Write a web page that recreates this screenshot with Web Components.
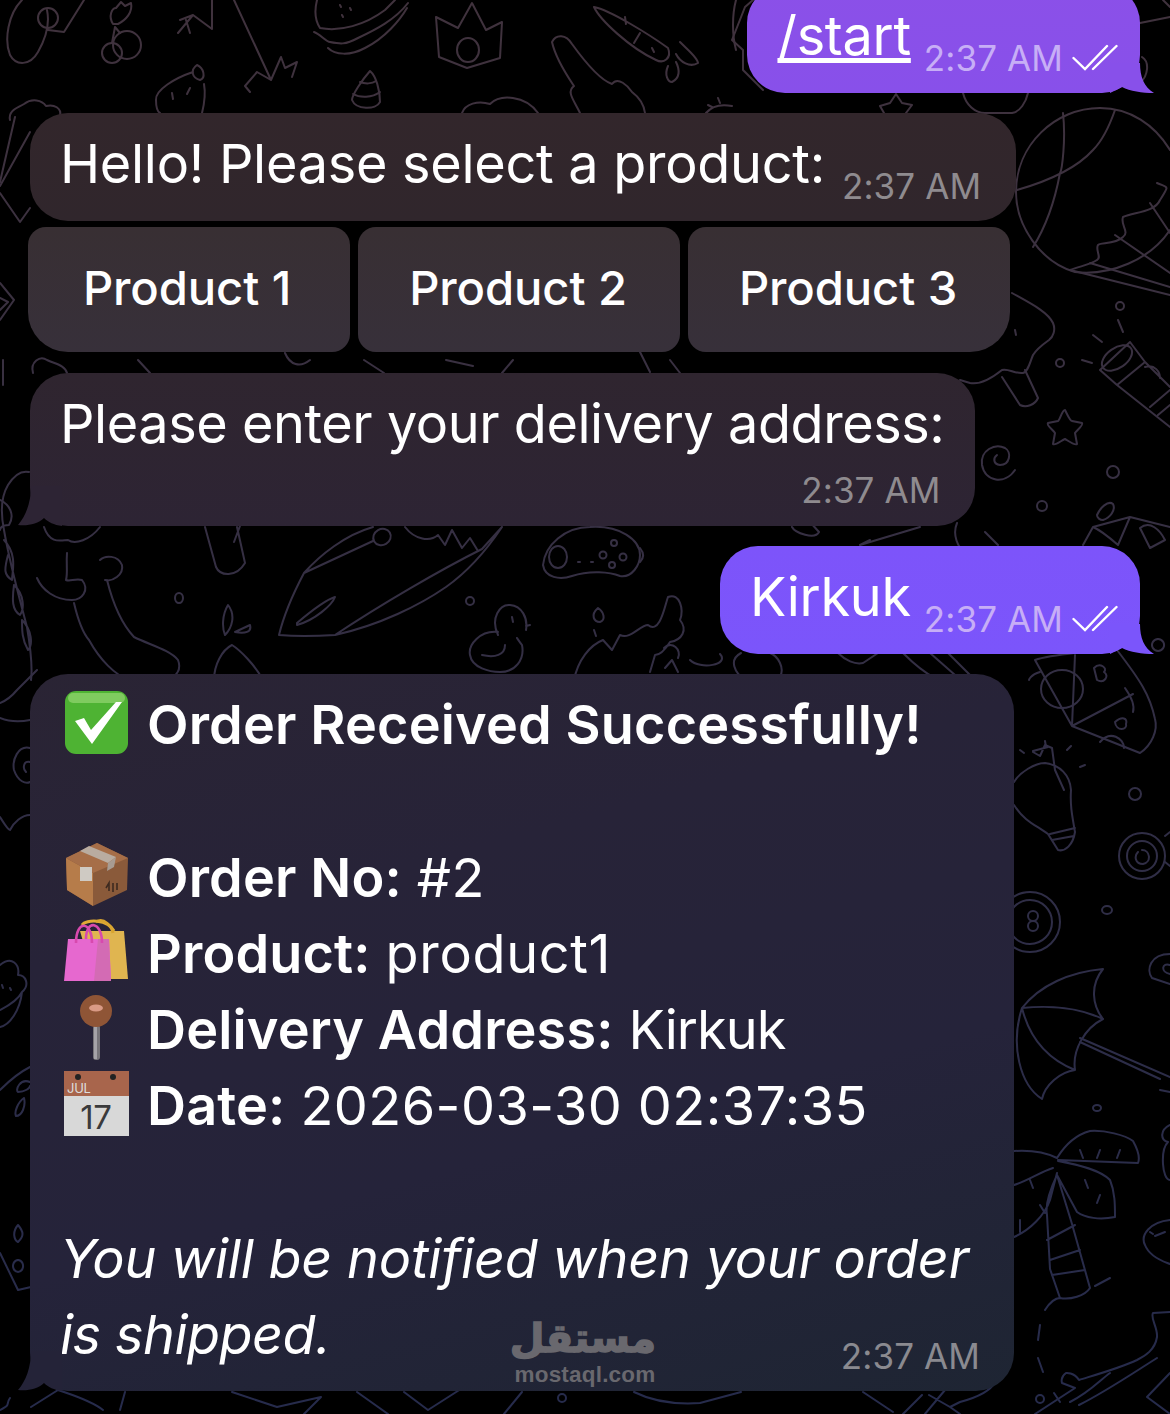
<!DOCTYPE html>
<html><head><meta charset="utf-8"><title>Chat</title>
<style>html,body{margin:0;padding:0;background:#000}</style></head><body>
<chat-screen>
<chat-bubble side="out" top="#8b50e8" bottom="#8850ea" first time="2:37 AM"><u>/start</u></chat-bubble>
<chat-bubble side="in" top="#32262b" bottom="#30262c" time="2:37 AM">Hello! Please select a product:</chat-bubble>
<key-row><key-btn pos="l">Product 1</key-btn><key-btn pos="m">Product 2</key-btn><key-btn pos="r">Product 3</key-btn></key-row>
<chat-bubble side="in" tail top="#2f252f" bottom="#2d2434" block ls="-.44" time="2:37 AM">Please enter your delivery address:</chat-bubble>
<chat-bubble side="out" top="#7d54fa" bottom="#7b55fb" time="2:37 AM">Kirkuk</chat-bubble>
<order-bubble></order-bubble>
</chat-screen>
<script>
class ChatScreen extends HTMLElement{constructor(){super();const s=this.attachShadow({mode:'open'});s.innerHTML=`<style>
:host{display:block;width:1170px;height:1414px;position:relative;overflow:hidden;background:#000;font-family:Inter,"Liberation Sans",sans-serif}
svg{position:absolute;inset:0}
.col{position:relative;display:flex;flex-direction:column;margin-top:-15px}
</style>
<svg width="1170" height="1414" viewBox="0 0 1170 1414" fill="none" stroke="url(#g)" stroke-width="2" stroke-linecap="round" stroke-linejoin="round">
<defs><linearGradient id="g" gradientUnits="userSpaceOnUse" x1="0" y1="0" x2="0" y2="1414"><stop offset="0" stop-color="#40323d"/><stop offset=".4" stop-color="#352f43"/><stop offset="1" stop-color="#262b4c"/></linearGradient></defs>
<path d="M22 0C8 14 4 40 10 55C16 66 30 66 38 52C46 38 50 24 47 10M48 30L64 32L84 0"/><circle cx="48" cy="18" r="10"/>
<circle cx="127" cy="45" r="14"/><circle cx="112" cy="53" r="10"/><path d="M115 27L120 33M115 27L112 43M113 24C108 16 112 8 116 8L121 2L125 6L131 3C133 12 126 20 118 24Z"/>
<path d="M212 0L212 29L193 15L180 20M193 15L178 33M186 20L190 33"/>
<path d="M234 0L271 80M250 92L245 86L257 72L271 80L281 57L285 68L297 62L292 77"/>
<path d="M193 72C175 78 155 90 156 100C156 108 158 112 160 113M204 84C206 95 204 105 202 113M197 65C190 70 192 78 200 80C206 78 204 68 197 65ZM172 93L173 99M190 88L187 94"/>
<path d="M317 0C314 12 316 22 320 28C340 32 365 25 385 10L395 0M314 32C320 34 326 42 330 42C340 44 345 45 358 38C375 30 395 20 408 3M328 48C335 55 350 56 365 48C385 38 400 20 407 8M340 5l1 2M342 15l1 2M350 8l1 2"/>
<path d="M370 71C362 80 352 95 352 100C356 110 376 110 380 102C380 90 376 76 370 71ZM353 94C360 98 372 98 380 92M360 82C365 84 372 84 376 81"/>
<path d="M436 17L458 28L472 3L486 30L502 22L500 58L467 68L439 57Z"/><ellipse cx="468" cy="50" rx="11" ry="12"/>
<path d="M594 7C610 10 650 35 668 48C672 58 664 64 656 60C630 48 600 20 594 7ZM625 17L626 24M640 33L634 43M652 48L654 52M680 42C688 50 698 58 698 63C690 68 680 62 676 54M668 66C664 75 668 82 672 82C680 78 680 70 676 62"/>
<path d="M552 42C556 34 566 34 572 44C585 62 600 80 612 84C618 76 628 86 632 92C640 98 644 105 645 113M552 42C556 60 570 80 574 86C566 92 574 100 580 113"/>
<path d="M462 113C465 104 478 100 490 104C500 94 525 95 538 113"/>
<path d="M10 120C8 110 18 108 24 104C32 98 42 100 46 106C54 104 62 108 60 116"/>
<path d="M706 113C712 106 722 104 732 106M718 98l2 5M708 105l4 2M736 0C732 15 732 35 736 50"/>
<path d="M732 40L745 7L753 0M732 40L743 50L743 70L763 90"/>
<path d="M880 106L890 103L896 94L902 103L912 105L906 113M884 113L880 106M963 93C966 105 975 113 985 113L1012 113C1020 112 1026 102 1028 93"/>
<path d="M1140 23L1170 17M1142 57C1150 62 1148 76 1140 83M1163 0L1170 7"/>
<path d="M1170 150C1155 125 1130 108 1100 108C1055 108 1016 145 1016 192C1016 225 1040 262 1075 272C1110 276 1150 260 1170 230"/>
<path d="M1063 113C1066 140 1062 170 1060 173C1055 200 1045 228 1033 247M1115 110C1108 130 1100 143 1093 150C1075 170 1045 182 1017 190"/>
<path d="M1157 183C1168 188 1170 184 1160 200C1155 212 1135 212 1123 217C1120 225 1130 232 1123 237C1115 245 1100 242 1098 245C1095 250 1102 258 1097 260C1090 265 1080 266 1070 270L1170 295M1090 263L1170 287M1150 203L1170 233M1115 235L1170 273"/>
<path d="M1012 293C1030 303 1048 312 1053 323C1056 330 1053 337 1049 340C1042 345 1036 350 1033 355C1030 362 1028 372 1023 373C1015 374 1008 368 1002 370C992 378 980 385 970 383L960 380M1002 377L1020 405C1026 408 1035 405 1038 398L1025 370M1015 330l1 5"/>
<circle cx="1120" cy="306" r="4"/><circle cx="1060" cy="363" r="4"/><path d="M1118 320L1123 332M1093 335L1102 342M1082 360L1092 363"/>
<path d="M1100 370L1130 342L1145 362L1117 385ZM1117 385L1170 427M1145 362L1170 387M1150 407L1170 390M1158 415L1170 405M1145 367C1155 364 1160 372 1160 378"/><ellipse cx="1117" cy="358" rx="17" ry="10" transform="rotate(-35 1117 358)"/>
<path d="M1065 410C1068 416 1070 421 1072 421L1082 423C1084 425 1076 431 1075 433L1077 444C1075 446 1067 440 1065 439C1062 440 1055 446 1053 444L1055 433C1052 429 1046 425 1048 423L1058 421C1060 420 1062 410 1065 410Z"/>
<path d="M1015 470C1005 485 985 482 982 465C980 450 995 443 1005 448C1012 452 1010 465 1000 465C993 464 993 458 997 455"/>
<circle cx="1113" cy="472" r="6"/><circle cx="1042" cy="506" r="5"/><path d="M1097 515C1100 508 1108 500 1113 504C1116 510 1110 518 1103 520C1100 520 1097 518 1097 515ZM1083 545L1093 527L1130 517L1170 527M1093 527C1100 530 1110 538 1118 545M1130 517L1118 545M1140 528C1150 520 1160 530 1165 540L1150 548Z"/>
<path d="M1035 660L1072 726L1140 753C1152 745 1158 730 1155 719C1150 695 1140 680 1117 650M1035 660C1050 655 1070 654 1100 650M1075 655L1072 726L1133 694M1125 688C1130 695 1135 705 1133 712"/><ellipse cx="1062" cy="689" rx="21" ry="19"/>
<path d="M1094 668C1100 662 1108 668 1104 672C1110 676 1104 684 1097 680ZM1115 722C1122 716 1128 718 1126 724C1128 730 1116 732 1115 722ZM1100 742C1110 730 1124 738 1124 748"/>
<circle cx="1135" cy="794" r="6"/>
<path d="M1014 782C1020 772 1035 763 1045 763C1060 765 1070 775 1071 790C1070 805 1072 815 1075 832C1073 845 1065 852 1058 850L1048 834C1036 825 1025 822 1014 805M1033 751L1048 747M1033 752L1040 756L1045 745L1052 748L1055 770L1064 790M1050 834L1075 828M1052 840L1074 836"/>
<path d="M1045 741l1 6M1020 750l4 3M1067 750l4-4M1080 767l5-2"/>
<circle cx="1142" cy="856" r="23"/><circle cx="1142" cy="856" r="15"/><path d="M1142 850C1150 850 1152 862 1143 864C1135 864 1134 856 1138 852M1165 862L1170 866M1170 832L1165 836"/>
<circle cx="1030" cy="922" r="30"/><circle cx="1030" cy="922" r="22"/><circle cx="1033" cy="916" r="5"/><circle cx="1033" cy="926" r="5"/>
<ellipse cx="1107" cy="910" rx="5" ry="4"/><path d="M1170 954C1150 954 1146 970 1152 978L1170 984M1170 965C1162 962 1160 972 1170 974"/>
<path d="M1022 1008C1040 985 1070 972 1103 969C1090 985 1092 1005 1103 1019C1085 1028 1072 1050 1075 1070C1060 1072 1045 1085 1042 1099C1020 1085 1010 1045 1022 1008ZM1022 1008C1050 1005 1080 1008 1103 1019M1022 1008C1030 1040 1050 1060 1075 1070M1080 1038L1170 1077M1080 1042L1160 1079M1170 1092L1160 1090"/>
<ellipse cx="1097" cy="1108" rx="4" ry="3"/><path d="M1170 1125C1160 1130 1160 1140 1168 1142C1160 1150 1162 1180 1170 1180"/>
<path d="M1014 1151C1030 1150 1045 1152 1057 1158C1065 1145 1075 1135 1090 1131C1105 1130 1125 1135 1133 1141C1138 1150 1140 1158 1138 1163L1058 1160M1058 1161C1080 1165 1100 1170 1110 1180C1115 1192 1115 1205 1115 1217C1100 1220 1085 1218 1077 1212L1057 1175M1014 1185C1030 1180 1040 1172 1053 1168M1014 1237C1030 1230 1045 1215 1050 1200L1057 1173M1057 1175C1050 1190 1045 1205 1047 1215L1050 1269L1060 1298C1070 1300 1085 1296 1090 1288L1072 1224ZM1047 1240L1075 1225M1050 1260L1080 1250M1052 1275L1085 1270M1080 1150l3 8M1100 1150l-3 8M1120 1150l-3 8M1085 1180l3 8M1100 1195l-3 8M1030 1180l3 8M1020 1220l0 12M1040 1205l5 8M1095 1286L1110 1278M1045 1310C1050 1302 1056 1298 1060 1298"/>
<path d="M1040 1325L1038 1340M1038 1358L1043 1372M1054 1393L1060 1402"/><circle cx="1040" cy="1399" r="4"/>
<path d="M1170 1220C1150 1222 1140 1235 1145 1245C1150 1258 1165 1262 1170 1264M1155 1236L1165 1232M1150 1232l3 2"/>
<path d="M1170 1312L1153 1313C1150 1318 1158 1328 1157 1337C1155 1350 1145 1356 1137 1360C1120 1368 1095 1375 1079 1380C1074 1372 1066 1373 1066 1373C1060 1377 1062 1383 1062 1383L1075 1388L1035 1414M1157 1358C1130 1375 1105 1392 1079 1405M1110 1373C1100 1380 1090 1392 1070 1402M1170 1373L1147 1397L1170 1414"/>
<path d="M863 1392L893 1412M922 1395L903 1414M929 1395L950 1407L960 1402C975 1398 990 1392 995 1382M950 1407L960 1414M945 1390L925 1414"/>
<path d="M31 1407L58 1390C72 1395 90 1400 103 1410M125 1392L120 1410M232 1392L277 1407L321 1397L304 1414M357 1392L388 1414M404 1392L428 1410L464 1387M504 1414L522 1392M634 1392C650 1400 670 1405 700 1403L741 1392M10 1398C5 1405 12 1404 0 1410"/><circle cx="562" cy="1398" r="4"/>
<path d="M15 117L0 182M30 132L0 186M0 193L20 222L30 208M0 283L14 300L0 320M0 298L8 302L0 310M3 360L3 385"/>
<path d="M29 472C20 470 13 477 8 485C2 495 0 510 4 530C10 565 20 600 27 627C30 645 33 665 31 680M0 500C10 505 15 515 9 525C0 525 0 530 0 530M4 540C18 555 12 572 12 580C4 575 4 570 8 555M14 585C25 595 24 610 20 615C12 610 12 600 14 585M22 620C32 630 33 645 28 650C22 640 22 630 22 620"/>
<path d="M33 373C30 362 40 355 47 360C55 364 65 365 67 373"/>
<path d="M0 703C8 700 12 696 17 690L37 670M0 718C10 722 20 722 30 720M30 748C18 745 12 760 14 770C18 782 26 784 30 782M30 762C24 760 22 768 26 772"/>
<path d="M0 817C5 825 8 830 10 830C14 822 22 815 30 815M0 965C12 955 20 965 18 975C26 975 30 985 22 992C20 1010 10 1025 0 1027M2 985l1 3M10 988l1 2M0 1010C10 1005 18 1000 22 992"/>
<path d="M0 1090C10 1080 20 1072 30 1067M30 1082C20 1078 15 1090 18 1092C25 1092 30 1088 30 1086M24 1098C18 1102 14 1112 16 1116C22 1116 26 1106 24 1098ZM18 1225C12 1232 14 1240 18 1242C24 1236 24 1232 18 1225ZM18 1260a5 6 0 1 0 .1 0M0 1253L18 1290L31 1287"/>
<path d="M138 360L150 373M364 360L384 373M446 360L473 366M502 373L513 360M670 360L680 373M285 353C290 365 300 368 310 360M640 352L650 372"/>
<path d="M44 527C50 545 62 540 68 540C75 545 90 540 100 527M67 553C66 565 68 572 66 580C70 582 75 578 82 580C90 590 82 600 72 600C55 600 42 590 37 578M74 603C78 620 82 632 89 640C100 660 115 675 129 680M107 580C112 600 120 622 134 637C150 645 170 650 178 660C182 670 176 675 170 680M100 560C105 555 118 555 122 565C124 575 112 582 105 580"/>
<path d="M205 527L216 567C220 576 236 578 245 563L237 527M234 542L240 526"/>
<path d="M279 635C285 610 295 590 304 573C320 555 345 535 373 527M279 635C300 637 320 636 335 635C380 625 420 605 446 587C470 570 490 545 502 527M304 573L373 541M335 635C380 605 440 570 482 549L502 527M297 623C310 612 325 600 335 597C332 605 315 620 297 625Z"/><ellipse cx="382" cy="537" rx="9" ry="8" transform="rotate(-30 382 537)"/>
<path d="M405 527C415 540 430 542 438 535L445 545L452 530L462 548L470 538L478 551"/>
<path d="M590 527C565 527 545 545 543 565C545 578 560 580 572 576C590 570 610 572 620 576C632 578 640 565 640 555C640 540 620 525 590 527Z"/><ellipse cx="558" cy="557" rx="9" ry="11"/><circle cx="614" cy="543" r="3"/><circle cx="603" cy="555" r="3.5"/><circle cx="623" cy="557" r="3.5"/><circle cx="612" cy="565" r="3"/><path d="M578 562l2 0M591 562l2 0"/>
<ellipse cx="179" cy="598" rx="4" ry="5"/><circle cx="470" cy="601" r="4"/>
<path d="M228 605C222 615 222 628 225 635C232 628 236 615 228 605ZM235 632L250 625C252 632 245 634 235 632ZM232 645C222 650 214 665 214 680M232 645C240 650 255 665 263 680"/>
<path d="M498 635C490 618 500 604 510 605C522 606 528 618 526 630M526 626L530 625M498 632C480 630 468 645 470 655C472 668 490 672 500 672C515 672 525 660 522 645C520 642 518 640 517 638M505 645C505 655 495 658 482 655M512 617l1 5"/>
<path d="M598 608C590 615 594 622 600 622C606 620 604 612 598 608ZM594 630l2 6M620 635C630 640 640 625 648 625C660 635 665 605 668 597C680 592 684 610 680 620C688 630 682 640 670 642C665 650 660 655 655 655L650 672M574 680C578 660 590 645 603 640L612 650L620 635M664 648C672 640 682 650 678 658M665 668L672 660L678 672"/>
<path d="M792 527C795 533 815 540 819 532L810 522M860 545L920 527M860 545L870 540M957 523C952 535 958 548 965 552M998 545L985 532M640 548C644 553 644 558 640 562"/>
<path d="M741 653C728 660 735 673 745 680M780 677C785 668 778 656 770 653M838 653C845 660 855 665 863 663L878 653M903 653C915 665 925 673 935 678M930 653L955 675M948 653L975 680M1158 639a6 6 0 1 0 .1 0"/>
<path d="M690 660C700 670 730 665 720 654M1040 672C1030 675 1029 680 1029 680"/>
</svg>
<div class="col"><slot></slot></div>`}}
customElements.define('chat-screen',ChatScreen);

const ticks=`<svg width="46" height="30" viewBox="0 0 46 30" fill="none" stroke="#fff" stroke-width="2.4" stroke-linecap="round" style="display:block;margin-top:-1px"><path d="M1.5 15L13 26L35 3M21 26L44.5 3"/></svg>`;
class ChatBubble extends HTMLElement{constructor(){super();this.attachShadow({mode:'open'})}
connectedCallback(){const o=this.getAttribute('side')==='out',tail=o||this.hasAttribute('tail'),t=this.getAttribute('top'),b=this.getAttribute('bottom'),blk=this.hasAttribute('block'),ls=this.getAttribute('ls')||'-.28';
this.shadowRoot.innerHTML=`<style>
:host{display:block;align-self:${o?'flex-end':'flex-start'};position:relative;flex:none;
margin:${o?'0 30px 20px 0':(blk?'0 0 20px 30px':'0 0 0 30px')};}
.b{position:relative;box-sizing:border-box;background:linear-gradient(${t},${b});border-radius:38px;color:#fff;display:flex;${blk?'flex-direction:column;height:153px;padding:13px 31px 0 30px':`align-items:flex-start;height:108px;padding:13px ${o?22:35}px 0 30px`};font-size:54px;line-height:76px;letter-spacing:${ls}px}
.t{white-space:nowrap}
.m{display:flex;align-items:center;gap:9px;font-size:35px;line-height:40px;letter-spacing:.1px;color:${o?'#c7aef6':'#8f8b8f'};white-space:nowrap;${blk?'align-self:flex-end;margin:8px 4px 0 0':`margin:40px 0 0 ${o?13:17}px`}}
.tail{position:absolute;${o?'right:-14px':'left:-12px'};bottom:0}
u{text-decoration-thickness:3px;text-underline-offset:5px}
</style><div class="b"><div class="t"><slot></slot></div><div class="m"><span>${this.getAttribute('time')}</span>${o?ticks:''}</div>
${tail?(o?`<svg class="tail" width="44" height="30" viewBox="0 0 44 30"><path d="M30 0C30 14 34 24 44 30C32 30 20 28 12 24L0 30L0 0Z" fill="${b}"/></svg>`:`<svg class="tail" width="44" height="40" viewBox="0 0 44 40"><path d="M13 0C13 16 8 30 0 39C10 40 20 38 26 32C30 36 36 39 44 40L44 0Z" fill="${b}"/></svg>`):''}</div>`;
}}
customElements.define('chat-bubble',ChatBubble);

class KeyRow extends HTMLElement{constructor(){super();this.attachShadow({mode:'open'}).innerHTML=`<style>:host{display:flex;gap:8px;margin:6px 0 21px 28px}</style><slot></slot>`}}
customElements.define('key-row',KeyRow);
class KeyBtn extends HTMLElement{constructor(){super();this.attachShadow({mode:'open'})}
connectedCallback(){const p=this.getAttribute('pos');const r={l:'18px 18px 18px 40px',m:'18px',r:'18px 18px 40px 18px'}[p];
this.shadowRoot.innerHTML=`<style>:host{display:flex;align-items:center;justify-content:center;box-sizing:border-box;width:322px;height:125px;background:linear-gradient(#382f33,#37303a);border-radius:${r};color:#fff;font-size:47.2px;font-weight:500;letter-spacing:-.1px;padding:0 ${p==='l'?4:2}px 4px 0}</style><slot></slot>`}}
customElements.define('key-btn',KeyBtn);

const E={
check:`<rect x="1" y="1" width="63" height="63" rx="11" fill="#4eb333"/><rect x="4" y="3" width="57" height="10" rx="5" fill="#7fcb5f"/><path d="M11 31L20 28L27 40L52 12L58 12L28 54Z" fill="#fff"/>`,
box:`<path d="M33 0L64 15L63 47L29 63L3 47L2 15Z" fill="#8a5a3a"/><path d="M2 15L29 30L29 63L3 47Z" fill="#b67c4a"/><path d="M33 0L64 15L29 30L2 15Z" fill="#a66e48"/><path d="M16 8L25 3L52 14L44 20Z" fill="#b9aca0"/><path d="M44 20L52 14L50 24L43 28Z" fill="#a89c92"/><rect x="16" y="24" width="12" height="14" fill="#cfcac3"/><path d="M42 45l3-5v8M49 40v9M53 40v7" stroke="#3d2a20" stroke-width="1.6" fill="none"/>`,
bag:`<path d="M18 6C22 0 44 0 50 12" fill="none" stroke="#e0ab35" stroke-width="3"/><path d="M16 12H60L64 60H30Z" fill="#e0b550"/><path d="M32 3C40 -2 48 8 49 14" fill="none" stroke="#d9a530" stroke-width="3"/><path d="M4 20H45L47 62L0 62Z" fill="#e668cf"/><path d="M34 20H45L47 62H30Z" fill="#d36bb4"/><path d="M12 24C12 0 28 2 28 24M22 20C22 0 38 2 38 24" fill="none" stroke="#d849ae" stroke-width="2.6"/>`,
pin:`<rect x="29" y="30" width="7" height="35" rx="3" fill="#77757a"/><rect x="30" y="30" width="3" height="34" fill="#a5a3a8"/><circle cx="32" cy="16" r="16" fill="#8f5536"/><ellipse cx="32" cy="13" rx="7" ry="3.5" fill="#d99a85"/>`,
cal:`<rect x="0" y="0" width="65" height="65" fill="#d8d8d8"/><rect x="0" y="0" width="65" height="25" fill="#a8654c"/><circle cx="14" cy="6" r="3" fill="#222"/><circle cx="49" cy="6" r="3" fill="#222"/><text x="3" y="22" font-family="Inter,sans-serif" font-size="13" fill="#ddd">JUL</text><text x="32" y="58" text-anchor="middle" font-family="Inter,sans-serif" font-size="33" fill="#3a3a3c">17</text>`};
class EmojiIcon extends HTMLElement{constructor(){super();this.attachShadow({mode:'open'})}
connectedCallback(){this.shadowRoot.innerHTML=`<style>:host{display:inline-block;width:65px;height:65px;margin:0 18px 0 4px;vertical-align:-11px}svg{display:block}</style><svg width="65" height="65" viewBox="0 0 65 65">${E[this.getAttribute('name')]}</svg>`}}
customElements.define('emoji-icon',EmojiIcon);

class OrderBubble extends HTMLElement{constructor(){super();this.attachShadow({mode:'open'}).innerHTML=`<style>
:host{display:block;flex:none;position:relative;margin:0 0 0 30px;width:984px}
.b{position:relative;box-sizing:border-box;height:717px;border-radius:38px;padding:13px 30px 0;background:linear-gradient(165deg,#2a2434,#272338 30%,#25233a 62%,#1e2533);color:#fff;font-size:54px;line-height:76.3px;letter-spacing:-.25px}
.l{display:block;height:76.3px;white-space:nowrap}
b{font-weight:600;letter-spacing:.15px}
.n{letter-spacing:.45px}
.p{letter-spacing:.65px}
.k{letter-spacing:-.95px}
i{display:block;font-style:italic;white-space:nowrap;height:76.3px}
.s{letter-spacing:-.55px}
.m{position:absolute;right:34px;bottom:15px;font-size:35px;line-height:40px;letter-spacing:.1px;color:#8a8a90}
.wm{position:absolute;left:484px;top:646px;width:142px;text-align:center;color:#69686e;pointer-events:none}
.ar{font:700 40px/36px "DejaVu Sans",sans-serif;letter-spacing:0;-webkit-text-stroke:1.5px #69686e}
.en{font:700 22.5px/22px "Liberation Sans",sans-serif;letter-spacing:.2px;white-space:nowrap;margin-top:8px}
.tail{position:absolute;left:-12px;bottom:0}
</style><div class="b">
<span class="l"><emoji-icon name="check"></emoji-icon><b>Order Received Successfully!</b></span>
<span class="l"></span>
<span class="l"><emoji-icon name="box"></emoji-icon><b>Order No:</b> <span class="n">#2</span></span>
<span class="l"><emoji-icon name="bag"></emoji-icon><b>Product:</b> <span class="p">product1</span></span>
<span class="l"><emoji-icon name="pin"></emoji-icon><b>Delivery Address:</b> <span class="k">Kirkuk</span></span>
<span class="l"><emoji-icon name="cal"></emoji-icon><b>Date:</b> <span class="n">2026-03-30 02:37:35</span></span>
<span class="l"></span>
<i>You will be notified when your order</i>
<i class="s">is shipped.</i>
<div class="m">2:37 AM</div>
<div class="wm"><div class="ar" dir="rtl" lang="ar">مستقل</div><div class="en">mostaql.com</div></div>
<svg class="tail" width="44" height="40" viewBox="0 0 44 40"><path d="M13 0C13 16 8 30 0 39C10 40 20 38 26 32C30 36 36 39 44 40L44 0Z" fill="#242338"/></svg>
</div>`}}
customElements.define('order-bubble',OrderBubble);
</script>
</body></html>
